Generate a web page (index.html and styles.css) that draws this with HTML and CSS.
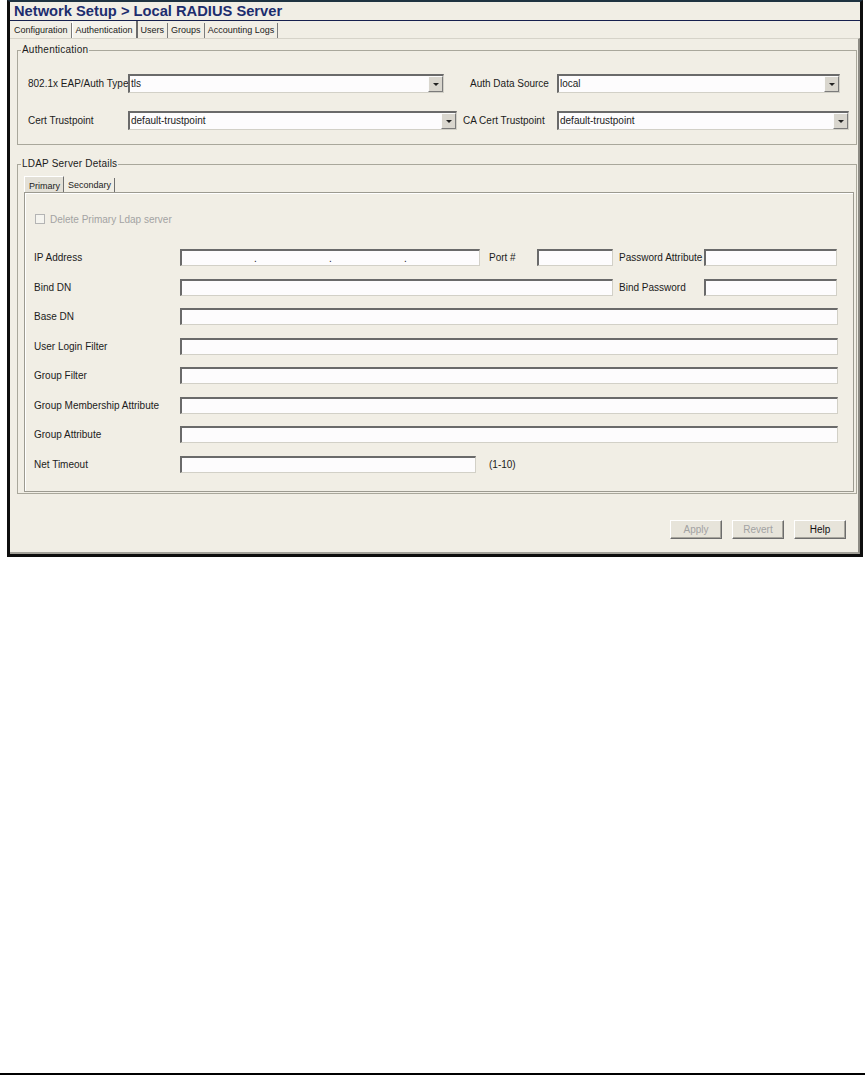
FILE: index.html
```html
<!DOCTYPE html>
<html lang="en">
<head>
    <meta charset="UTF-8">
    <title>Local RADIUS Server</title>
    <link rel="stylesheet" href="styles.css">
</head>
<body>
    <!-- Dialog window -->
    <div class="window">
        <div class="title">Network Setup &gt; Local RADIUS Server</div>

        <!-- Top tabs -->
        <div class="tabbar">
            <span class="tab">Configuration</span>
            <span class="tab active">Authentication</span>
            <span class="tab">Users</span>
            <span class="tab">Groups</span>
            <span class="tab">Accounting Logs</span>
        </div>

        <div class="tabpanel">
            <!-- Authentication group -->
            <fieldset class="group">
                <legend>Authentication</legend>
                <div class="auth-body">
                    <div class="frow">
                        <span class="lbl">802.1x EAP/Auth Type</span>
                        <div class="select sel-eap"><span class="sel-text">tls</span><span class="arrow"></span></div>
                        <span class="lbl lbl-src">Auth Data Source</span>
                        <div class="select sel-src"><span class="sel-text">local</span><span class="arrow"></span></div>
                    </div>
                    <div class="frow">
                        <span class="lbl">Cert Trustpoint</span>
                        <div class="select sel-cert"><span class="sel-text">default-trustpoint</span><span class="arrow"></span></div>
                        <span class="lbl lbl-ca">CA Cert Trustpoint</span>
                        <div class="select sel-ca"><span class="sel-text">default-trustpoint</span><span class="arrow"></span></div>
                    </div>
                </div>
            </fieldset>

            <!-- LDAP group -->
            <fieldset class="group ldap">
                <legend>LDAP Server Details</legend>
                <div class="ldap-body">
                    <div class="subtabs">
                        <span class="subtab active">Primary</span>
                        <span class="subtab">Secondary</span>
                    </div>
                    <div class="subpanel">
                        <div class="check-row">
                            <span class="checkbox"></span>
                            <span>Delete Primary Ldap server</span>
                        </div>
                        <div class="fields">
                            <div class="row">
                                <span class="f-label">IP Address</span>
                                <div class="field f-ip">
                                    <span class="octet"></span><span class="dot">.</span>
                                    <span class="octet"></span><span class="dot">.</span>
                                    <span class="octet"></span><span class="dot">.</span>
                                    <span class="octet"></span>
                                </div>
                                <span class="f-port-label">Port #</span>
                                <div class="field f-port"></div>
                                <span class="f-side-label">Password Attribute</span>
                                <div class="field f-side"></div>
                            </div>
                            <div class="row">
                                <span class="f-label">Bind DN</span>
                                <div class="field f-bind"></div>
                                <span class="f-side-label">Bind Password</span>
                                <div class="field f-side"></div>
                            </div>
                            <div class="row">
                                <span class="f-label">Base DN</span>
                                <div class="field f-full"></div>
                            </div>
                            <div class="row">
                                <span class="f-label">User Login Filter</span>
                                <div class="field f-full"></div>
                            </div>
                            <div class="row">
                                <span class="f-label">Group Filter</span>
                                <div class="field f-full"></div>
                            </div>
                            <div class="row">
                                <span class="f-label">Group Membership Attribute</span>
                                <div class="field f-full"></div>
                            </div>
                            <div class="row">
                                <span class="f-label">Group Attribute</span>
                                <div class="field f-full"></div>
                            </div>
                            <div class="row">
                                <span class="f-label">Net Timeout</span>
                                <div class="field f-timeout"></div>
                                <span class="hint">(1-10)</span>
                            </div>
                        </div>
                    </div>
                </div>
            </fieldset>

            <!-- Buttons -->
            <div class="buttons">
                <button class="btn" disabled>Apply</button>
                <button class="btn" disabled>Revert</button>
                <button class="btn">Help</button>
            </div>
        </div>
    </div>

    <div class="page-rule"></div>
</body>
</html>
```

FILE: styles.css
```css
/* Reset */
* {
    margin: 0;
    padding: 0;
    box-sizing: border-box;
}

body {
    height: 1076px;
    display: flex;
    flex-direction: column;
    justify-content: space-between;
    background: #fff;
    font-family: "Liberation Sans", Arial, sans-serif;
    font-size: 10px;
    color: #1b1b1b;
}

/* Window frame */
.window {
    width: 856px;
    margin-left: 7px;
    border: 3px solid #0e0e0e;
    border-top: 2px solid #1f3341;
    background: #f1eee5;
}

.title {
    height: 19px;
    padding: 1px 0 0 4px;
    line-height: 17px;
    font-size: 14.7px;
    font-weight: bold;
    color: #1d2d6e;
    border-bottom: 1px solid #16204e;
}

/* Top tabs */
.tabbar {
    display: flex;
    align-items: flex-end;
    height: 17px;
    padding-left: 1px;
}

.tab {
    height: 15px;
    line-height: 15px;
    padding: 0 3px;
    font-size: 9px;
    color: #222;
    border-right: 1px solid #7c7c7c;
}

.tab.active {
    height: 17px;
    padding-top: 2px;
    border-left: 1px solid #fff;
    border-right: 2px solid #6b6b6b;
    background: #f4f2eb;
}

.tabpanel {
    border-top: 1px solid #d6d3c9;
    border-right: 2px solid #8d8b84;
    border-bottom: 2px solid #a3a199;
    padding: 5px 1px 13px 7px;
}

/* Group boxes */
.group {
    border: 1px solid #a9a79b;
    min-width: 0;
}

.group legend {
    margin-left: 3px;
    padding: 0 1px;
    font-size: 10px;
    line-height: 12px;
    letter-spacing: 0.2px;
}

.ldap {
    margin-top: 13px;
}

.auth-body {
    display: flex;
    flex-direction: column;
    gap: 18px;
    padding: 18px 0 14px 10px;
}

.frow {
    display: flex;
    align-items: center;
    height: 19px;
}

.lbl {
    width: 100px;
    white-space: nowrap;
}

.lbl-src {
    width: 87px;
    margin-left: 26px;
}

.lbl-ca {
    width: 94px;
    margin-left: 6px;
}

/* Combo boxes */
.select {
    display: flex;
    height: 19px;
    border-style: solid;
    border-width: 2px 1px 1px 2px;
    border-color: #6a6a6a #d2d0c7 #d2d0c7 #6a6a6a;
    background: #fdfcfd;
}

.sel-text {
    flex: 1;
    padding-left: 1px;
    line-height: 16px;
}

.arrow {
    width: 15px;
    height: 16px;
    display: flex;
    align-items: center;
    justify-content: center;
    background: #d9d6ce;
    border: 1px solid;
    border-color: #fbfbfb #7b7b7b #7b7b7b #fbfbfb;
}

.arrow::after {
    content: "";
    border-left: 3px solid transparent;
    border-right: 3px solid transparent;
    border-top: 3px solid #222;
}

.sel-eap { width: 316px; }
.sel-src { width: 283px; }
.sel-cert { width: 329px; }
.sel-ca { width: 292px; }

/* LDAP details */
.ldap-body {
    padding: 6px 2px 1px 6px;
}

.subtabs {
    display: flex;
    align-items: flex-end;
    height: 16px;
}

.subtab {
    height: 14px;
    line-height: 14px;
    padding: 0 3px 0 4px;
    font-size: 9px;
    color: #222;
    border-right: 1px solid #6f6f6f;
}

.subtab.active {
    height: 16px;
    padding-top: 2px;
    border-left: 1px solid #fff;
    border-top: 1px solid #fff;
    background: #e3e0d7;
}

.subpanel {
    border: 1px solid #9c9a90;
    box-shadow: inset 1px 1px 0 #fff;
    padding: 20px 15px 18px 9px;
}

.check-row {
    display: flex;
    align-items: center;
    height: 12px;
    margin-bottom: 24px;
    color: #a3a3a3;
}

.checkbox {
    width: 10px;
    height: 10px;
    margin: 0 5px 0 1px;
    border: 1px solid #b4b4b4;
    background: #f5f4ef;
}

.fields {
    display: flex;
    flex-direction: column;
    gap: 12.57px;
}

.row {
    display: flex;
    align-items: center;
    height: 17px;
    white-space: nowrap;
}

.f-label {
    width: 146px;
}

.field {
    height: 17px;
    border-style: solid;
    border-width: 2px 1px 1px 2px;
    border-color: #6a6a6a #d2d0c7 #d2d0c7 #6a6a6a;
    background: #fdfcfd;
}

.f-ip {
    display: flex;
    width: 300px;
}

.octet {
    flex: 1;
}

.dot {
    width: 3px;
    line-height: 15px;
}

.f-port-label {
    width: 48px;
    margin-left: 9px;
}

.f-port { width: 76px; }

.f-side-label {
    width: 85px;
    margin-left: 6px;
}

.f-side { width: 133px; }
.f-bind { width: 433px; }
.f-full { flex: 1; }
.f-timeout { width: 296px; }

.hint {
    margin-left: 13px;
}

/* Buttons */
.buttons {
    display: flex;
    justify-content: flex-end;
    gap: 10px;
    margin-top: 26px;
    padding-right: 11px;
}

.btn {
    width: 52px;
    height: 19px;
    font-family: "Liberation Sans", Arial, sans-serif;
    font-size: 10px;
    color: #111;
    background: #e7e4da;
    border: 1px solid;
    border-color: #fff #6c6c6c #6c6c6c #fff;
    box-shadow: inset -1px -1px 0 #a7a59d;
}

.btn:disabled {
    color: #a2a2a2;
}

.page-rule {
    height: 2px;
    margin-bottom: 1px;
    background: #000;
}
```
